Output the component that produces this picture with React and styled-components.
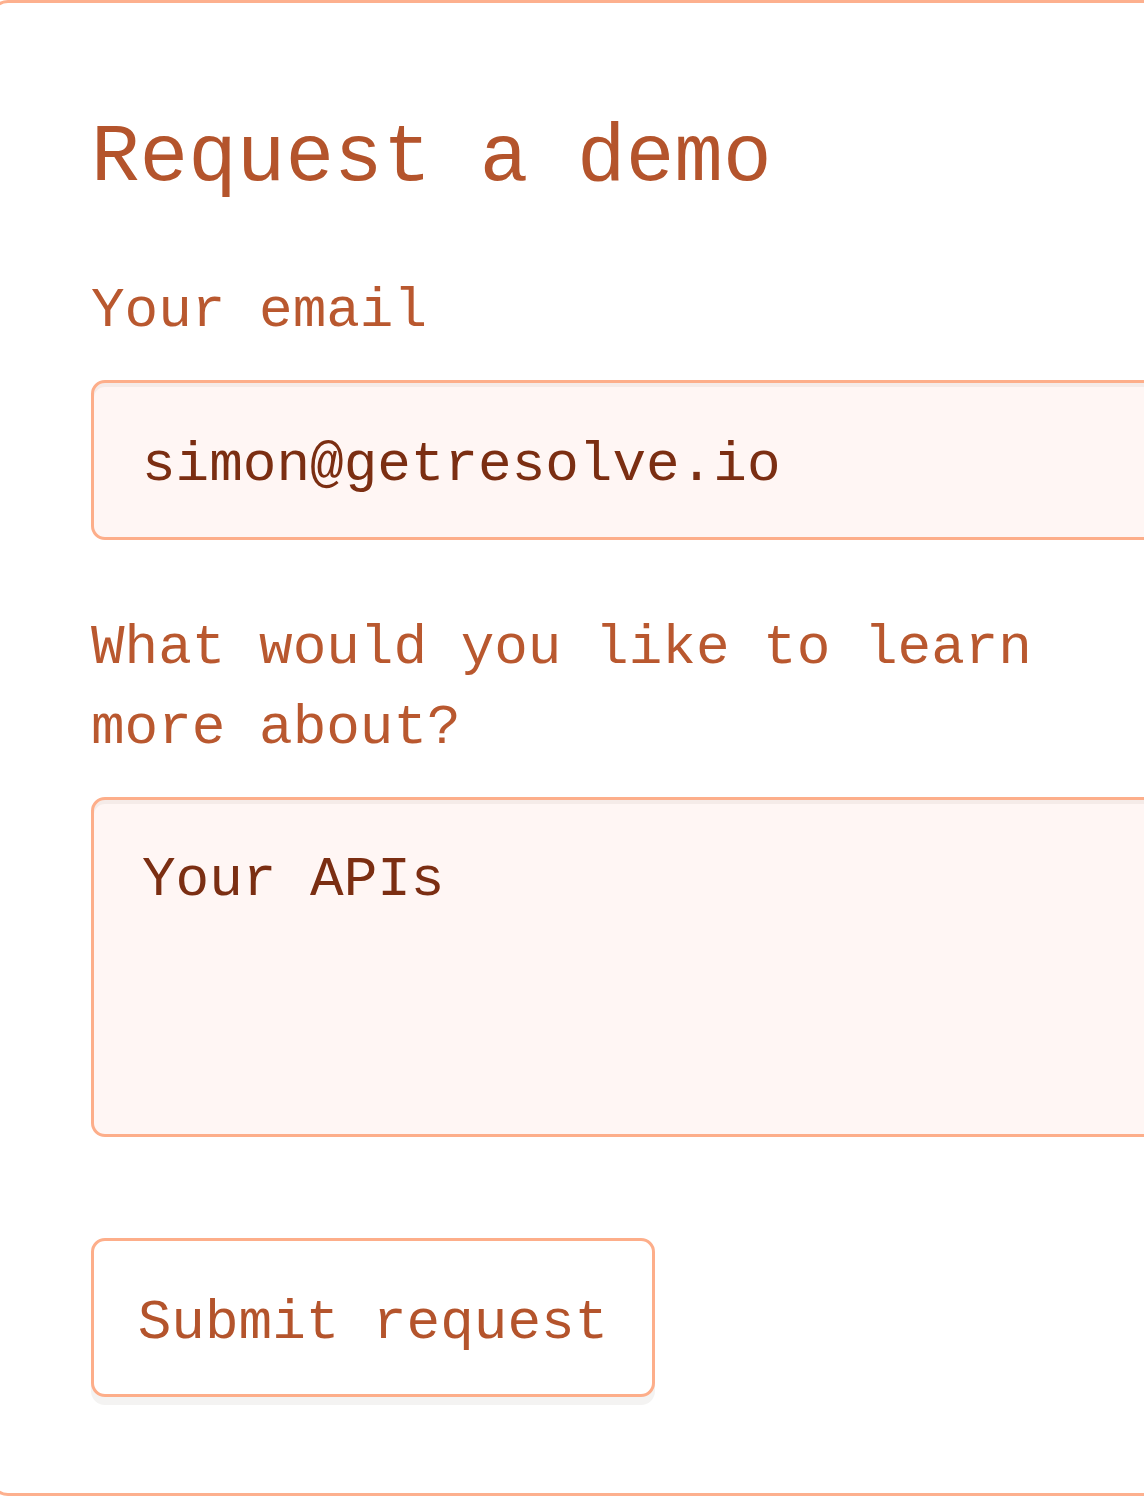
import styled, { createGlobalStyle } from 'styled-components';

const GlobalStyle = createGlobalStyle`
    html, body {
        margin: 0;
        padding: 0;
        background: #ffffff;
        overflow: hidden;
    }
    body {
        font-family: "Liberation Mono", "DejaVu Sans Mono", monospace;
    }
`

const Card = styled.section`
    box-sizing: border-box;
    width: 1400px;
    height: 1496px;
    margin-left: -10px;
    border: 3px solid #fdb08e;
    border-radius: 18px;
    background: #ffffff;
    padding: 96px 0 0 98px;
`

const Title = styled.h2`
    margin: 0 0 52px;
    font-size: 81px;
    line-height: 120px;
    font-weight: 400;
    color: #b4542c;
`

const Form = styled.form`
    display: flex;
    flex-direction: column;
    width: 1200px;
`

const Label = styled.label`
    display: block;
    font-size: 56px;
    line-height: 80px;
    color: #b9582f;
    width: 960px;
    margin-bottom: 29px;
`

const Field = styled.div`
    box-sizing: border-box;
    height: ${(props) => props.$tall ? '340px' : '160px'};
    border: 3px solid #fdae8a;
    border-radius: 14px;
    background: #fff6f4;
    box-shadow: inset 0 4px 0 rgba(120, 100, 90, 0.07);
    padding: ${(props) => props.$tall ? '50px' : '52px'} 0 0 48px;
    margin-bottom: ${(props) => props.$tall ? '101px' : '68px'};
    font-size: 56px;
    line-height: 60px;
    color: #7b2e12;
    white-space: nowrap;
`

const Button = styled.button`
    box-sizing: border-box;
    align-self: flex-start;
    width: 564px;
    height: 159px;
    border: 3px solid #fdae8a;
    border-radius: 14px;
    background: #ffffff;
    box-shadow: 0 8px 0 rgba(120, 100, 90, 0.08);
    font-family: inherit;
    font-size: 56px;
    color: #b4542c;
    padding: 10px 0 0;
    cursor: pointer;
`

const App = () => {
    return (
        <>
            <GlobalStyle />
            <Card>
                <Title>Request a demo</Title>
                <Form onSubmit={(e) => e.preventDefault()}>
                    <Label>Your email</Label>
                    <Field>simon@getresolve.io</Field>
                    <Label>What would you like to learn more about?</Label>
                    <Field $tall>Your APIs</Field>
                    <Button type="submit">Submit request</Button>
                </Form>
            </Card>
        </>
    )
}

export default App
